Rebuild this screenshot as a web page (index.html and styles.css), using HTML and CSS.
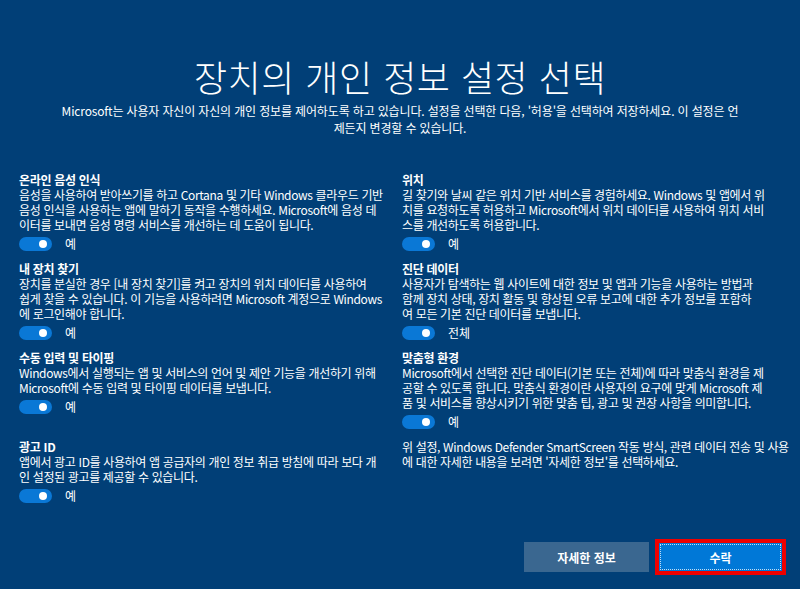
FILE: index.html
```html
<!DOCTYPE html>
<html lang="ko">
<head>
<meta charset="utf-8">
<title>장치의 개인 정보 설정 선택</title>
<link rel="stylesheet" href="styles.css">
</head>
<body>
<div class="page">
  <h1 class="title">장치의 개인 정보 설정 선택</h1>
  <p class="intro">Microsoft는 사용자 자신이 자신의 개인 정보를 제어하도록 하고 있습니다. 설정을 선택한 다음, '허용'을 선택하여 저장하세요. 이 설정은 언<br>제든지 변경할 수 있습니다.</p>

  <div class="grid">
    <section class="item">
      <h2>온라인 음성 인식</h2>
      <p>음성을 사용하여 받아쓰기를 하고 Cortana 및 기타 Windows 클라우드 기반<br>음성 인식을 사용하는 앱에 말하기 동작을 수행하세요. Microsoft에 음성 데<br>이터를 보내면 음성 명령 서비스를 개선하는 데 도움이 됩니다.</p>
      <div class="toggle-row"><span class="toggle"><span class="knob"></span></span><span class="state">예</span></div>
    </section>
    <section class="item">
      <h2>위치</h2>
      <p>길 찾기와 날씨 같은 위치 기반 서비스를 경험하세요. Windows 및 앱에서 위<br>치를 요청하도록 허용하고 Microsoft에서 위치 데이터를 사용하여 위치 서비<br>스를 개선하도록 허용합니다.</p>
      <div class="toggle-row"><span class="toggle"><span class="knob"></span></span><span class="state">예</span></div>
    </section>

    <section class="item">
      <h2>내 장치 찾기</h2>
      <p>장치를 분실한 경우 [내 장치 찾기]를 켜고 장치의 위치 데이터를 사용하여<br>쉽게 찾을 수 있습니다. 이 기능을 사용하려면 Microsoft 계정으로 Windows<br>에 로그인해야 합니다.</p>
      <div class="toggle-row"><span class="toggle"><span class="knob"></span></span><span class="state">예</span></div>
    </section>
    <section class="item">
      <h2>진단 데이터</h2>
      <p>사용자가 탐색하는 웹 사이트에 대한 정보 및 앱과 기능을 사용하는 방법과<br>함께 장치 상태, 장치 활동 및 향상된 오류 보고에 대한 추가 정보를 포함하<br>여 모든 기본 진단 데이터를 보냅니다.</p>
      <div class="toggle-row"><span class="toggle"><span class="knob"></span></span><span class="state">전체</span></div>
    </section>

    <section class="item">
      <h2>수동 입력 및 타이핑</h2>
      <p>Windows에서 실행되는 앱 및 서비스의 언어 및 제안 기능을 개선하기 위해<br>Microsoft에 수동 입력 및 타이핑 데이터를 보냅니다.</p>
      <div class="toggle-row"><span class="toggle"><span class="knob"></span></span><span class="state">예</span></div>
    </section>
    <section class="item">
      <h2>맞춤형 환경</h2>
      <p>Microsoft에서 선택한 진단 데이터(기본 또는 전체)에 따라 맞춤식 환경을 제<br>공할 수 있도록 합니다. 맞춤식 환경이란 사용자의 요구에 맞게 Microsoft 제<br>품 및 서비스를 향상시키기 위한 맞춤 팁, 광고 및 권장 사항을 의미합니다.</p>
      <div class="toggle-row"><span class="toggle"><span class="knob"></span></span><span class="state">예</span></div>
    </section>

    <section class="item">
      <h2>광고 ID</h2>
      <p>앱에서 광고 ID를 사용하여 앱 공급자의 개인 정보 취급 방침에 따라 보다 개<br>인 설정된 광고를 제공할 수 있습니다.</p>
      <div class="toggle-row"><span class="toggle"><span class="knob"></span></span><span class="state">예</span></div>
    </section>
    <section class="item">
      <p>위 설정, Windows Defender SmartScreen 작동 방식, 관련 데이터 전송 및 사용<br>에 대한 자세한 내용을 보려면 '자세한 정보'를 선택하세요.</p>
    </section>
  </div>

  <div class="actions">
    <button class="btn btn-secondary" type="button">자세한 정보</button>
    <button class="btn btn-primary" type="button">수락</button>
  </div>
</div>
</body>
</html>
```

FILE: styles.css
```css
html, body {
  margin: 0;
  padding: 0;
}

body {
  background: #013f77;
  color: #ffffff;
  font-family: "Noto Sans CJK KR", "Noto Sans", sans-serif;
}

.page {
  height: 589px;
  box-sizing: border-box;
  display: flex;
  flex-direction: column;
  padding: 54px 0 17px;
}

.title {
  margin: 0;
  text-align: center;
  font-size: 36px;
  line-height: 45px;
  font-weight: 300;
  letter-spacing: 0.5px;
}

.intro {
  margin: 3px 0 0;
  text-align: center;
  font-size: 12px;
  line-height: 17px;
  letter-spacing: -0.15px;
}

.grid {
  margin-top: 36px;
  padding-left: 19px;
  display: grid;
  grid-template-columns: 370px 370px;
  column-gap: 13px;
  row-gap: 10px;
}

.item h2 {
  margin: 0;
  font-size: 12px;
  line-height: 15px;
  font-weight: 700;
  letter-spacing: -0.3px;
}

.item p {
  margin: 0;
  font-size: 12px;
  line-height: 15px;
  white-space: nowrap;
  letter-spacing: -0.35px;
}

.toggle-row {
  display: flex;
  align-items: center;
  gap: 13px;
  margin-top: 5px;
  height: 14px;
}

.toggle {
  width: 33px;
  height: 14px;
  border-radius: 7px;
  background: #0a78d6;
  display: flex;
  align-items: center;
  justify-content: flex-end;
  padding-right: 5px;
  box-sizing: border-box;
}

.knob {
  width: 8px;
  height: 8px;
  border-radius: 50%;
  background: #ffffff;
}

.state {
  font-size: 12px;
  line-height: 14px;
}

.actions {
  margin-top: auto;
  display: flex;
  justify-content: flex-end;
  gap: 9px;
  padding-right: 17px;
}

.btn {
  width: 125px;
  height: 30px;
  border: 0;
  padding: 0;
  font-family: inherit;
  font-size: 12px;
  font-weight: 700;
  color: #ffffff;
}

.btn-secondary {
  background: #3a6790;
}

.btn-primary {
  position: relative;
  background: #0078d7;
  outline: 4px solid #ee0000;
  outline-offset: -1px;
}

.btn-primary::after {
  content: "";
  position: absolute;
  top: 2px;
  left: 2px;
  right: 2px;
  bottom: 2px;
  border: 1px dotted rgba(255, 255, 255, 0.75);
}
```
